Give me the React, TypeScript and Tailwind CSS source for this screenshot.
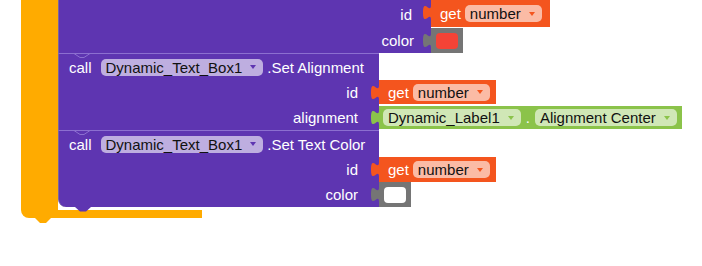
import type { ReactNode } from 'react'

const PURPLE = '#5e35b1'
const ORANGE = '#f4551e'
const GREEN = '#8bc34a'
const GRAY = '#757575'

function Arrow({ fill }: { fill: string }) {
  return (
    <svg width="6" height="4" viewBox="0 0 6 4" className="shrink-0">
      <path d="M0 0h6L3 4z" fill={fill} />
    </svg>
  )
}

function Pill({ children, arrow }: { children: ReactNode; arrow: string }) {
  return (
    <div className="flex h-[17px] items-center gap-[8px] rounded-[5px] bg-white/60 pl-[5px] pr-[7px] leading-none text-[#111]">
      <span>{children}</span>
      <Arrow fill={arrow} />
    </div>
  )
}

// output tab on the left edge of a value block
function Tab({ fill }: { fill: string }) {
  return (
    <svg width="8" height="20" viewBox="0 0 8 20" className="relative -ml-[8px] shrink-0">
      <path d="M8 5C8 15 0 -3 0 12.5C0 28 8 10 8 20Z" fill={fill} />
    </svg>
  )
}

function GetNumber({ h = 'h-[24px]', pr = 'pr-[6px]' }: { h?: string; pr?: string }) {
  return (
    <div className="flex items-start">
      <Tab fill={ORANGE} />
      <div className={`flex ${h} items-center gap-[4px] bg-[#f4551e] pl-[9px] ${pr} text-white`}>
        <span className="leading-none">get</span>
        <Pill arrow={ORANGE}>number</Pill>
      </div>
    </div>
  )
}

function ColorSwatch({ swatch, className = '' }: { swatch: string; className?: string }) {
  return (
    <div className={`flex items-start ${className}`}>
      <Tab fill={GRAY} />
      <div className="flex h-[25px] w-[32px] items-center justify-center bg-[#757575]">
        <div className={`h-[16px] w-[22px] rounded-[4px] ${swatch}`} />
      </div>
    </div>
  )
}

function Notch() {
  return (
    <svg width="17" height="6" viewBox="0 0 17 6" className="absolute left-[15px] -top-[1px]">
      <polyline points="0,0.5 6,4.5 10,4.5 16,0.5" fill="none" stroke="#8c6fd0" strokeWidth="1" />
    </svg>
  )
}

function Header({ method }: { method: string }) {
  return (
    <div className="relative flex h-[27px] w-[321px] items-center border-l border-t border-l-[#7a66a0] border-t-[#8c6fd0] bg-[#5e35b1] pl-[10px] text-white">
      <Notch />
      <span className="mr-[9px] leading-none">call</span>
      <Pill arrow={PURPLE}>Dynamic_Text_Box1</Pill>
      <span className="ml-[4px] leading-none">{method}</span>
    </div>
  )
}

function Label({ children, w, pr, extra = '' }: { children: ReactNode; w: string; pr: string; extra?: string }) {
  return (
    <div className={`flex h-[25px] ${w} items-center justify-end border-l border-[#7a66a0] bg-[#5e35b1] ${pr} leading-none text-white ${extra}`}>
      {children}
    </div>
  )
}

export default function App() {
  return (
    <div className="h-[266px] w-[702px] overflow-hidden bg-white pl-[21px] font-['Liberation_Sans',Arial,sans-serif] text-[15px]">
      <div className="flex flex-col items-start">
        <div className="flex">
          {/* control block arm */}
          <div className="w-[37px] bg-[#ffab00]" />

          <div className="flex flex-col items-start pb-[3px]">
            {/* block cut off at the top */}
            <div className="flex items-start">
              <div className="flex h-[27px] w-[373px] items-center justify-end border-l border-[#7a66a0] bg-[#5e35b1] pr-[19px] pt-[2px] leading-none text-white">id</div>
              <GetNumber h="h-[27px]" pr="pr-[8px]" />
            </div>
            <div className="flex items-start">
              <div className="flex h-[26px] w-[373px] items-center justify-end border-l border-[#7a66a0] bg-[#5e35b1] pr-[17px] leading-none text-white">color</div>
              <ColorSwatch swatch="bg-[#f44336]" className="mt-[1px]" />
            </div>

            {/* Set Alignment */}
            <Header method=".Set Alignment" />
            <div className="flex items-start">
              <Label w="w-[321px]" pr="pr-[21px]">id</Label>
              <GetNumber />
            </div>
            <div className="flex items-start">
              <Label w="w-[321px]" pr="pr-[21px]">alignment</Label>
              <div className="flex items-start">
                <Tab fill={GREEN} />
                <div className="mt-[1px] flex h-[23px] items-center bg-[#8bc34a] pl-[4px] pr-[5px] text-white">
                  <Pill arrow={GREEN}>Dynamic_Label1</Pill>
                  <span className="mx-[5px] leading-none">.</span>
                  <Pill arrow={GREEN}>Alignment Center</Pill>
                </div>
              </div>
            </div>

            {/* Set Text Color */}
            <Header method=".Set Text Color" />
            <div className="flex items-start">
              <Label w="w-[321px]" pr="pr-[21px]">id</Label>
              <GetNumber h="h-[25px]" />
            </div>
            <div className="flex items-start">
              <Label w="w-[321px]" pr="pr-[21px]" extra="relative rounded-bl-[8px]">
                color
                <svg width="16" height="5" viewBox="0 0 16 5" className="absolute left-[16px] top-full">
                  <path d="M0 0L5 4.5H11L16 0Z" fill={PURPLE} />
                </svg>
              </Label>
              <ColorSwatch swatch="bg-white" />
            </div>
          </div>
        </div>

        <div className="h-[8px] w-[181px] rounded-bl-[8px] bg-[#ffab00]" />
        <svg width="16" height="5" viewBox="0 0 16 5" className="ml-[14px]">
          <path d="M0 0L5 5H11L16 0Z" fill="#ffab00" />
        </svg>
      </div>
    </div>
  )
}
